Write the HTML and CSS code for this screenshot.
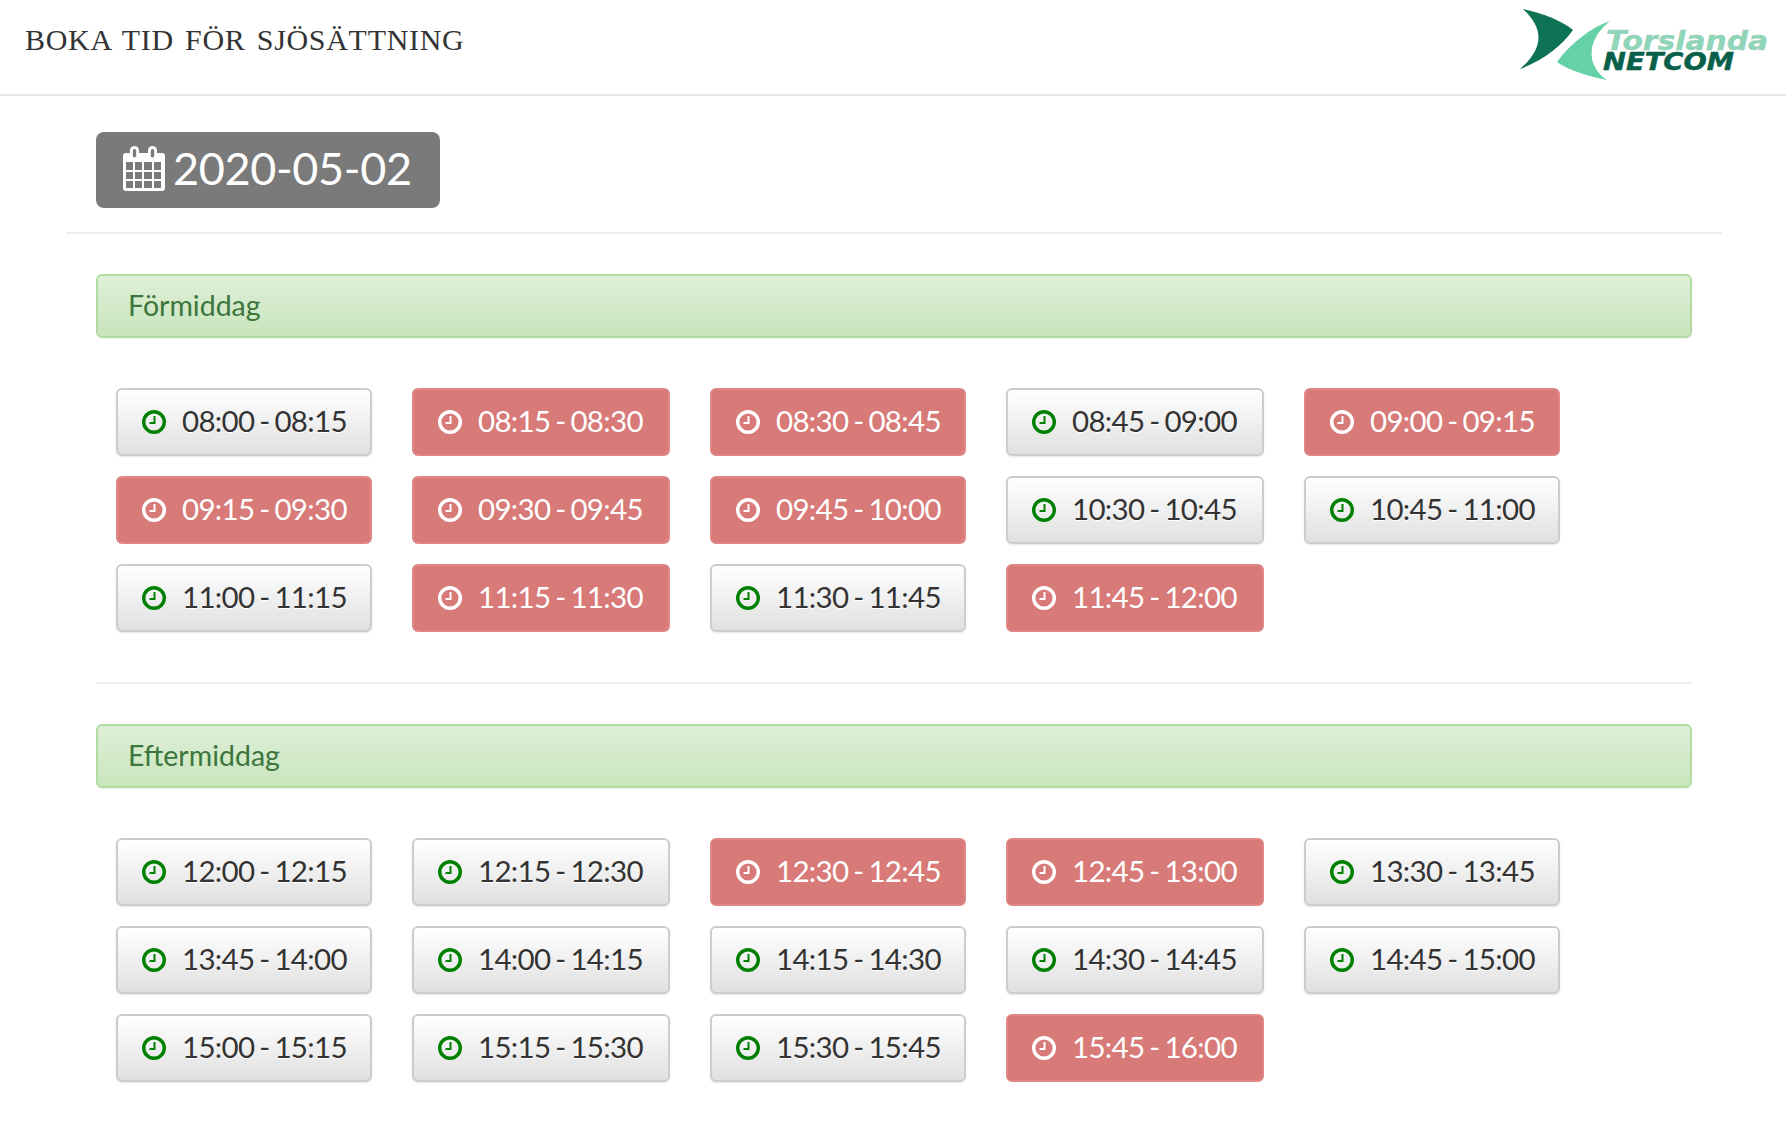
FILE: index.html
```html
<!DOCTYPE html>
<html lang="sv">
<head>
<meta charset="utf-8">
<title>Boka tid för sjösättning</title>
<link rel="stylesheet" href="styles.css">
</head>
<body>
<svg class="defs" width="0" height="0" aria-hidden="true">
  <symbol id="clock" viewBox="0 0 24 24">
    <circle cx="12" cy="12" r="10.3" fill="none" stroke="currentColor" stroke-width="3.4"/>
    <path d="M12.5 6v7H7.5" fill="none" stroke="currentColor" stroke-width="2"/>
  </symbol>
</svg>
<header class="topbar">
  <h1 class="title">Boka tid för sjösättning</h1>
  <div class="logo">
    <svg class="logo-mark" viewBox="0 0 250 80" width="250" height="80">
      <path d="M3 1C22 5 43 13 53 22C42 38 22 53 0 61C22 42 26 22 3 1Z" fill="#0d7354"/>
      <path d="M90 13C70 20 50 36 37 54C48 62 68 68 87 72C66 58 66 32 90 13Z" fill="#66d1a6"/>
      <text class="logo-top" x="86" y="42" textLength="162" lengthAdjust="spacingAndGlyphs">Torslanda</text>
      <text class="logo-bottom" x="83" y="62" textLength="131" lengthAdjust="spacingAndGlyphs">NETCOM</text>
    </svg>
  </div>
</header>
<main class="page">
  <div class="date-row">
    <span class="date-badge">
      <svg class="cal" viewBox="0 0 42 45" width="42" height="45" aria-hidden="true">
        <path class="cal-body" fill-rule="evenodd" d="M3 7h36a3 3 0 0 1 3 3v32a3 3 0 0 1-3 3H3a3 3 0 0 1-3-3V10a3 3 0 0 1 3-3ZM3 16v8h7v-8Zm9 0v8h7v-8Zm9 0v8h8v-8Zm10 0v8h7v-8ZM3 26v7h7v-7Zm9 0v7h7v-7Zm9 0v7h8v-7Zm10 0v7h7v-7ZM3 35v7h7v-7Zm9 0v7h7v-7Zm9 0v7h8v-7Zm10 0v7h7v-7Z"/>
        <rect class="cal-body" x="7" y="0" width="9" height="14" rx="4.5"/>
        <rect class="cal-body" x="25" y="0" width="9" height="14" rx="4.5"/>
        <rect class="cal-slot" x="9.8" y="3" width="3.4" height="8.5" rx="1.7"/>
        <rect class="cal-slot" x="27.8" y="3" width="3.4" height="8.5" rx="1.7"/>
      </svg>
      2020-05-02
    </span>
  </div>
  <hr class="rule rule-wide">
  <section class="block">
    <div class="band">Förmiddag</div>
    <div class="slots">
      <a class="slot"><svg class="ico"><use href="#clock"/></svg>08:00 - 08:15</a>
      <a class="slot taken"><svg class="ico"><use href="#clock"/></svg>08:15 - 08:30</a>
      <a class="slot taken"><svg class="ico"><use href="#clock"/></svg>08:30 - 08:45</a>
      <a class="slot"><svg class="ico"><use href="#clock"/></svg>08:45 - 09:00</a>
      <a class="slot taken"><svg class="ico"><use href="#clock"/></svg>09:00 - 09:15</a>
      <a class="slot taken"><svg class="ico"><use href="#clock"/></svg>09:15 - 09:30</a>
      <a class="slot taken"><svg class="ico"><use href="#clock"/></svg>09:30 - 09:45</a>
      <a class="slot taken"><svg class="ico"><use href="#clock"/></svg>09:45 - 10:00</a>
      <a class="slot"><svg class="ico"><use href="#clock"/></svg>10:30 - 10:45</a>
      <a class="slot"><svg class="ico"><use href="#clock"/></svg>10:45 - 11:00</a>
      <a class="slot"><svg class="ico"><use href="#clock"/></svg>11:00 - 11:15</a>
      <a class="slot taken"><svg class="ico"><use href="#clock"/></svg>11:15 - 11:30</a>
      <a class="slot"><svg class="ico"><use href="#clock"/></svg>11:30 - 11:45</a>
      <a class="slot taken"><svg class="ico"><use href="#clock"/></svg>11:45 - 12:00</a>
    </div>
  </section>
  <hr class="rule rule-inner">
  <section class="block">
    <div class="band">Eftermiddag</div>
    <div class="slots slots-pm">
      <a class="slot"><svg class="ico"><use href="#clock"/></svg>12:00 - 12:15</a>
      <a class="slot"><svg class="ico"><use href="#clock"/></svg>12:15 - 12:30</a>
      <a class="slot taken"><svg class="ico"><use href="#clock"/></svg>12:30 - 12:45</a>
      <a class="slot taken"><svg class="ico"><use href="#clock"/></svg>12:45 - 13:00</a>
      <a class="slot"><svg class="ico"><use href="#clock"/></svg>13:30 - 13:45</a>
      <a class="slot"><svg class="ico"><use href="#clock"/></svg>13:45 - 14:00</a>
      <a class="slot"><svg class="ico"><use href="#clock"/></svg>14:00 - 14:15</a>
      <a class="slot"><svg class="ico"><use href="#clock"/></svg>14:15 - 14:30</a>
      <a class="slot"><svg class="ico"><use href="#clock"/></svg>14:30 - 14:45</a>
      <a class="slot"><svg class="ico"><use href="#clock"/></svg>14:45 - 15:00</a>
      <a class="slot"><svg class="ico"><use href="#clock"/></svg>15:00 - 15:15</a>
      <a class="slot"><svg class="ico"><use href="#clock"/></svg>15:15 - 15:30</a>
      <a class="slot"><svg class="ico"><use href="#clock"/></svg>15:30 - 15:45</a>
      <a class="slot taken"><svg class="ico"><use href="#clock"/></svg>15:45 - 16:00</a>
    </div>
  </section>
</main>
</body>
</html>
```
FILE: styles.css
```css
* { box-sizing: border-box; }
html, body { margin: 0; padding: 0; background: #fff; }
body { font-family: Lato, "Open Sans", sans-serif; color: #333; min-height: 1121px; }
.defs { position: absolute; }
.topbar { height: 96px; border-bottom: 2px solid #e7e7e7; display: flex; justify-content: space-between; padding-left: 25px; }
.title { margin: 0; padding-top: 21px; font-family: "Liberation Serif", serif; font-weight: 400; font-size: 30px; line-height: 38px; letter-spacing: .7px; word-spacing: 3px; text-transform: uppercase; color: #333; }
.logo { padding: 8px 16px 0 0; }
.logo-mark { display: block; }
.logo-top { font-family: "DejaVu Sans", sans-serif; font-style: italic; font-weight: 700; font-size: 27px; fill: #8ed6b8; stroke: #a5cdbc; stroke-width: .4px; }
.logo-bottom { font-family: "DejaVu Sans", sans-serif; font-style: italic; font-weight: 700; font-size: 24px; fill: #08604a; stroke: #08604a; stroke-width: .5px; }
.page { padding: 36px 64px 0 66px; }
.date-row { padding-left: 30px; }
.date-badge { display: inline-flex; align-items: center; gap: 8px; height: 76px; width: 344px; padding: 0 0 4px 27px; background: #7a7a7a; color: #fff; border-radius: 8px; font-size: 45px; letter-spacing: -.35px; }
.cal-body { fill: #fff; }
.cal-slot { fill: #7a7a7a; }
.rule { border: 0; height: 2px; background: #eee; margin: 0; }
.rule-wide { margin-top: 24px; }
.block { padding: 0 30px; }
.band { margin-top: 40px; height: 64px; padding: 0 0 2px 30px; display: flex; align-items: center; font-size: 28.5px; color: #3c763d; border: 2px solid #b2dba1; border-radius: 6px; background: linear-gradient(#dff0d8, #c8e5bc); box-shadow: 0 1px 1px rgba(0,0,0,.05); }
.slots { display: grid; grid-template-columns: 256px 258px 256px 258px 256px; column-gap: 40px; row-gap: 20px; padding: 50px 0 0 20px; }
.slots-pm { padding-top: 50px; }
.slot { height: 68px; display: flex; align-items: center; gap: 16px; padding: 0 0 3px 24px; font-size: 29.5px; letter-spacing: -.68px; word-spacing: -2px; color: #333; border: 2px solid #ccc; border-radius: 6px; background: linear-gradient(#fff, #e0e0e0); box-shadow: 0 1px 2px rgba(0,0,0,.1); text-shadow: 0 1px 0 #fff; }
.ico { width: 24px; height: 24px; margin-top: 3px; color: #008000; flex: none; }
.taken { color: #fff; background: #d87a78; border-color: #df8686; box-shadow: none; text-shadow: none; }
.taken .ico { color: #fff; }
.rule-inner { margin: 50px 30px 0; }
```
